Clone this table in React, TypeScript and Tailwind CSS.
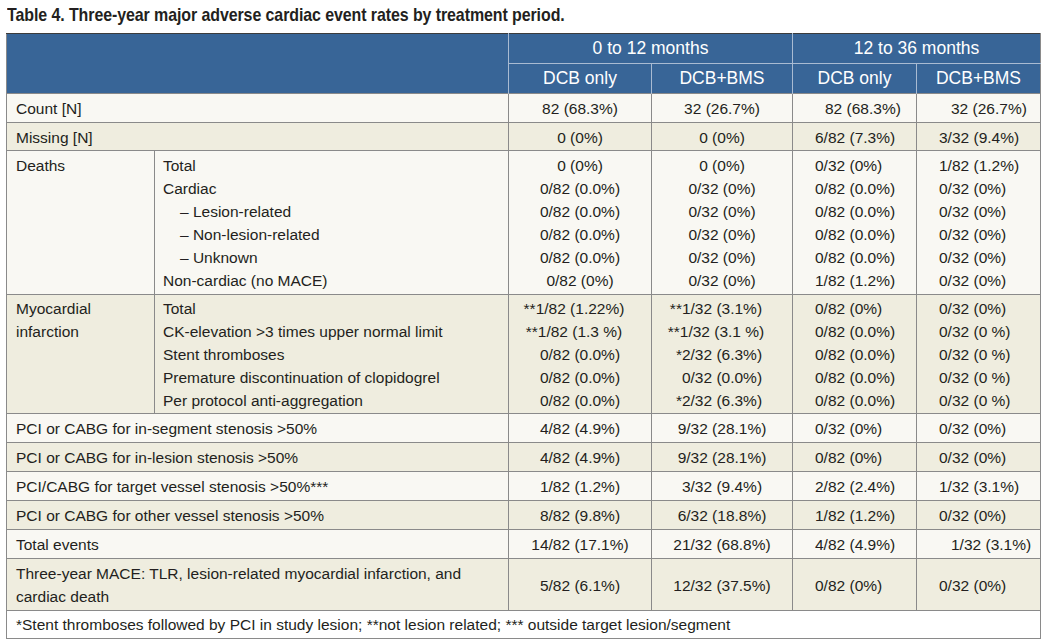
const cream = "bg-[#f9f8f3]";
const beige = "bg-[#efeddf]";

type Row = {
  label: string[];
  sub?: string[];
  cells: string[][];
  bg: string;
  middle?: boolean;
  py?: string;
  left?: [string, string];
};

const rows: Row[] = [
  {
    label: ["Count [N]"],
    cells: [["82 (68.3%)"], ["32 (26.7%)"], ["82 (68.3%)"], ["32 (26.7%)"]],
    bg: cream,
    left: ["pl-[32px]", "pl-[34px]"],
  },
  {
    label: ["Missing [N]"],
    cells: [["0 (0%)"], ["0 (0%)"], ["6/82 (7.3%)"], ["3/32 (9.4%)"]],
    bg: beige,
    py: "pt-[3px] pb-[1px]",
  },
  {
    label: ["Deaths"],
    sub: ["Total", "Cardiac", "– Lesion-related", "– Non-lesion-related", "– Unknown", "Non-cardiac (no MACE)"],
    cells: [
      ["0 (0%)", "0/82 (0.0%)", "0/82 (0.0%)", "0/82 (0.0%)", "0/82 (0.0%)", "0/82 (0%)"],
      ["0 (0%)", "0/32 (0%)", "0/32 (0%)", "0/32 (0%)", "0/32 (0%)", "0/32 (0%)"],
      ["0/32 (0%)", "0/82 (0.0%)", "0/82 (0.0%)", "0/82 (0.0%)", "0/82 (0.0%)", "1/82 (1.2%)"],
      ["1/82 (1.2%)", "0/32 (0%)", "0/32 (0%)", "0/32 (0%)", "0/32 (0%)", "0/32 (0%)"],
    ],
    bg: cream,
  },
  {
    label: ["Myocardial", "infarction"],
    sub: [
      "Total",
      "CK-elevation >3 times upper normal limit",
      "Stent thromboses",
      "Premature discontinuation of clopidogrel",
      "Per protocol anti-aggregation",
    ],
    cells: [
      ["**1/82 (1.22%)", "**1/82 (1.3 %)", "0/82 (0.0%)", "0/82 (0.0%)", "0/82 (0.0%)"],
      ["**1/32 (3.1%)", "**1/32 (3.1 %)", "*2/32 (6.3%)", "0/32 (0.0%)", "*2/32 (6.3%)"],
      ["0/82 (0%)", "0/82 (0.0%)", "0/82 (0.0%)", "0/82 (0.0%)", "0/82 (0.0%)"],
      ["0/32 (0%)", "0/32 (0 %)", "0/32 (0 %)", "0/32 (0 %)", "0/32 (0 %)"],
    ],
    bg: beige,
    py: "pt-[2px] pb-[1px]",
  },
  {
    label: ["PCI or CABG for in-segment stenosis >50%"],
    cells: [["4/82 (4.9%)"], ["9/32 (28.1%)"], ["0/32 (0%)"], ["0/32 (0%)"]],
    bg: cream,
  },
  {
    label: ["PCI or CABG for in-lesion stenosis >50%"],
    cells: [["4/82 (4.9%)"], ["9/32 (28.1%)"], ["0/82 (0%)"], ["0/32 (0%)"]],
    bg: beige,
  },
  {
    label: ["PCI/CABG for target vessel stenosis >50%***"],
    cells: [["1/82 (1.2%)"], ["3/32 (9.4%)"], ["2/82 (2.4%)"], ["1/32 (3.1%)"]],
    bg: cream,
  },
  {
    label: ["PCI or CABG for other vessel stenosis >50%"],
    cells: [["8/82 (9.8%)"], ["6/32 (18.8%)"], ["1/82 (1.2%)"], ["0/32 (0%)"]],
    bg: beige,
  },
  {
    label: ["Total events"],
    cells: [["14/82 (17.1%)"], ["21/32 (68.8%)"], ["4/82 (4.9%)"], ["1/32 (3.1%)"]],
    bg: cream,
    left: ["pl-[22px]", "pl-[34px]"],
  },
  {
    label: ["Three-year MACE: TLR, lesion-related myocardial infarction, and", "cardiac death"],
    cells: [["5/82 (6.1%)"], ["12/32 (37.5%)"], ["0/82 (0%)"], ["0/32 (0%)"]],
    bg: beige,
    middle: true,
  },
];

const Line = ({ text }: { text: string }) => {
  const m = text.match(/^(\*+)(.*)$/);
  if (!m) return <div>{text}</div>;
  return (
    <div>
      <span className="relative">
        <span className="absolute right-full">{m[1]}</span>
        {m[2]}
      </span>
    </div>
  );
};

const SubLine = ({ text }: { text: string }) =>
  text.startsWith("–") ? <div className="pl-[17px]">{text}</div> : <div>{text}</div>;

const td = "border border-[#8a8a8a] leading-[23px]";

export default function App() {
  return (
    <div className="w-[1049px] h-[642px] bg-white pt-[5px] text-[#231f20] font-['Liberation_Sans',Arial,sans-serif]">
      <h1 className="pl-[7px] h-[28px] text-[19px] leading-[20px] font-bold whitespace-nowrap">
        <span className="inline-block origin-left scale-x-[0.84] tracking-[-0.1px]">
          Table 4. Three-year major adverse cardiac event rates by treatment period.
        </span>
      </h1>
      <table className="ml-[6px] w-[1034px] border-collapse table-fixed text-[15.5px]">
        <colgroup>
          <col className="w-[148px]" />
          <col className="w-[354px]" />
          <col className="w-[143px]" />
          <col className="w-[141px]" />
          <col className="w-[124px]" />
          <col className="w-[124px]" />
        </colgroup>
        <thead className="bg-[#386597] text-white text-[17.5px]">
          <tr className="h-[30px]">
            <th colSpan={2} rowSpan={2} className="border-t border-t-[#3c3c3c] border-l border-l-[#8a8a8a] border-r border-r-[#a9bbd2]" />
            <th colSpan={2} className="font-normal border-t border-t-[#3c3c3c] border-r border-r-[#a9bbd2] border-b border-b-[#a9bbd2]">
              0 to 12 months
            </th>
            <th colSpan={2} className="font-normal border-t border-t-[#3c3c3c] border-r border-r-[#8a8a8a] border-b border-b-[#a9bbd2]">
              12 to 36 months
            </th>
          </tr>
          <tr className="h-[30px]">
            <th className="font-normal border-r border-r-[#a9bbd2]">DCB only</th>
            <th className="font-normal border-r border-r-[#a9bbd2]">DCB+BMS</th>
            <th className="font-normal border-r border-r-[#a9bbd2]">DCB only</th>
            <th className="font-normal border-r border-r-[#8a8a8a]">DCB+BMS</th>
          </tr>
        </thead>
        <tbody>
          {rows.map((r, i) => {
            const py = r.py ?? "pt-[3px] pb-[2px]";
            const va = r.middle ? "align-middle" : "align-top";
            const left = r.left ?? ["pl-[22px]", "pl-[22px]"];
            return (
              <tr key={i} className={r.bg}>
                {r.sub ? (
                  <>
                    <td className={`${td} ${py} pl-[9px] align-top`}>
                      {r.label.map((l) => (
                        <div key={l}>{l}</div>
                      ))}
                    </td>
                    <td className={`${td} ${py} pl-[8px] align-top`}>
                      {r.sub.map((s) => (
                        <SubLine key={s} text={s} />
                      ))}
                    </td>
                  </>
                ) : (
                  <td colSpan={2} className={`${td} ${py} pl-[9px] align-top`}>
                    {r.label.map((l) => (
                      <div key={l}>{l}</div>
                    ))}
                  </td>
                )}
                {r.cells.map((c, j) => (
                  <td
                    key={j}
                    className={`${td} ${py} ${va} ${
                      j < 2 ? "text-center" : `text-left ${j === 2 ? left[0] : left[1]}`
                    }`}
                  >
                    {c.map((t, k) => (
                      <Line key={k} text={t} />
                    ))}
                  </td>
                ))}
              </tr>
            );
          })}
          <tr className="bg-white">
            <td colSpan={6} className={`${td} pt-[2px] pb-[2px] pl-[9px]`}>
              *Stent thromboses followed by PCI in study lesion; **not lesion related; *** outside target lesion/segment
            </td>
          </tr>
        </tbody>
      </table>
    </div>
  );
}
